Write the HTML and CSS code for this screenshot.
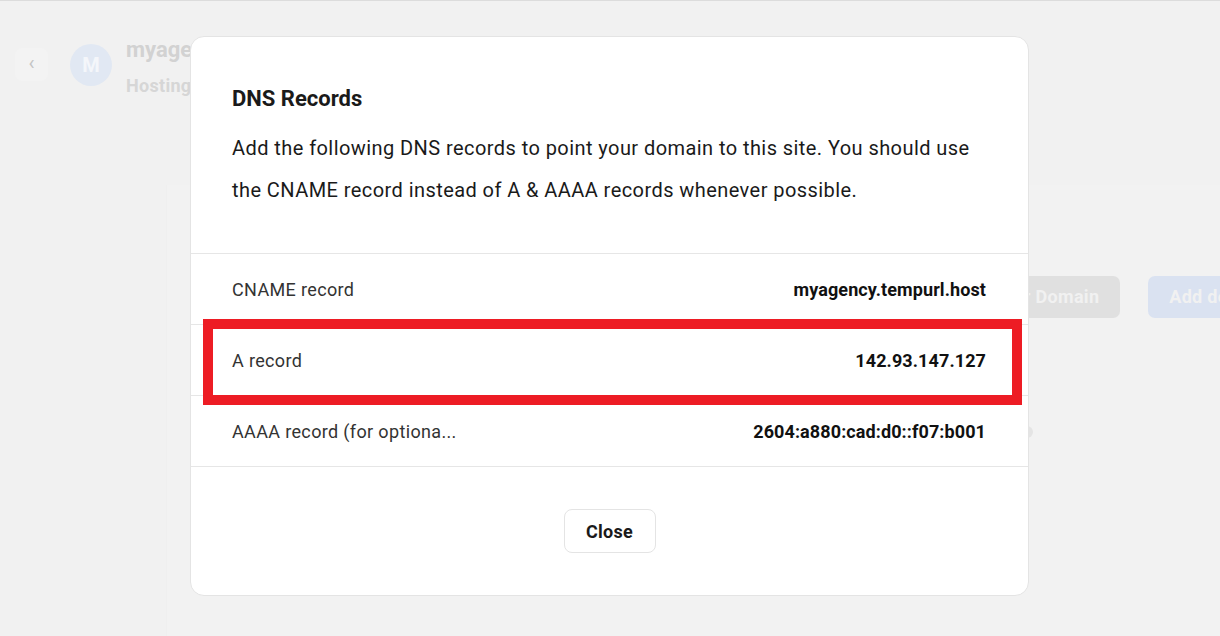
FILE: index.html
```html
<!DOCTYPE html>
<html lang="en">
<head>
<meta charset="utf-8">
<title>DNS Records</title>
<link rel="stylesheet" href="styles.css">
</head>
<body>
<div class="page">
  <header class="site-head">
    <div class="back-btn">‹</div>
    <div class="avatar">M</div>
    <div class="site-meta">
      <div class="site-name">myagency</div>
      <div class="site-sub">Hosting</div>
    </div>
  </header>
  <section class="bg-card">
    <div class="bg-actions">
      <div class="bg-btn gray">Transfer Domain</div>
      <div class="bg-btn blue">Add domain</div>
    </div>
    <div class="bg-dot-row"><span class="bg-dot"></span></div>
  </section>
</div>

<div class="overlay">
  <div class="modal">
    <div class="modal-head">
      <h2 class="modal-title">DNS Records</h2>
      <p class="modal-desc">Add the following DNS records to point your domain to this site. You should use the CNAME record instead of A &amp; AAAA records whenever possible.</p>
    </div>
    <div class="records">
      <div class="record">
        <span class="rec-label">CNAME record</span>
        <span class="rec-value">myagency.tempurl.host</span>
      </div>
      <div class="record highlighted">
        <span class="rec-label">A record</span>
        <span class="rec-value">142.93.147.127</span>
        <span class="red-box"></span>
      </div>
      <div class="record">
        <span class="rec-label">AAAA record (for optiona...</span>
        <span class="rec-value">2604:a880:cad:d0::f07:b001</span>
      </div>
    </div>
    <div class="modal-foot">
      <button class="close-btn">Close</button>
    </div>
  </div>
</div>
</body>
</html>
```

FILE: styles.css
```css
* { box-sizing: border-box; }
html, body { margin: 0; padding: 0; }
body {
  width: 1220px;
  height: 636px;
  overflow: hidden;
  background: #f1f1f1;
  border-top: 1px solid #dcdcdc;
  font-family: Roboto, "Liberation Sans", Arial, sans-serif;
  position: relative;
}

/* background page (faded behind modal) */
.page {
  padding: 43px 0 0 15px;
  height: 635px;
  overflow: hidden;
}
.site-head {
  display: flex;
  align-items: flex-start;
}
.back-btn {
  width: 33px;
  height: 33px;
  margin-top: 4px;
  border-radius: 7px;
  background: #f3f3f3;
  color: #c4c4c4;
  font-size: 20px;
  line-height: 31px;
  text-align: center;
}
.avatar {
  width: 42px;
  height: 42px;
  margin-left: 22px;
  border-radius: 50%;
  background: #e1e8f3;
  color: #f4f6fa;
  font-weight: 700;
  font-size: 20px;
  line-height: 42px;
  text-align: center;
}
.site-meta {
  margin-left: 14px;
  margin-top: -9px;
}
.site-name {
  font-size: 22px;
  font-weight: 700;
  color: #d2d2d2;
  line-height: 30px;
}
.site-sub {
  margin-top: 8px;
  font-size: 18px;
  font-weight: 700;
  color: #d6d6d6;
  line-height: 26px;
  letter-spacing: 0.3px;
}
.bg-card {
  margin: 86px 0 0 151px;
  width: 1100px;
  height: 460px;
  background: #f2f2f2;
  border-left: 1px solid #efefef;
}
.bg-actions {
  display: flex;
  gap: 28px;
  padding: 91px 0 0 772px;
}
.bg-btn {
  height: 42px;
  padding: 0 21px;
  border-radius: 7px;
  font-size: 18px;
  font-weight: 700;
  color: #f1f1f1;
  line-height: 42px;
  white-space: nowrap;
  letter-spacing: 0.3px;
}
.bg-btn.gray { background: #e0e0e0; }
.bg-btn.blue { background: #dae2f1; width: 150px; }
.bg-dot-row {
  padding: 108px 0 0 854px;
}
.bg-dot {
  display: block;
  width: 12px;
  height: 12px;
  border-radius: 50%;
  background: #e4e4e4;
}

/* modal overlay */
.overlay {
  position: absolute;
  inset: 0;
  display: flex;
  justify-content: flex-start;
  padding: 35px 0 0 190px;
}
.modal {
  position: relative;
  width: 839px;
  height: 560px;
  background: #fff;
  border: 1px solid #e4e4e4;
  border-radius: 14px;
  display: flex;
  flex-direction: column;
}
.modal-head {
  padding: 47px 42px 42px 41px;
  border-bottom: 1px solid #e6e6e6;
}
.modal-title {
  margin: 0;
  font-size: 22px;
  font-weight: 700;
  line-height: 30px;
  color: #1a1a1a;
}
.modal-desc {
  margin: 13px 0 0;
  font-size: 20px;
  line-height: 42px;
  letter-spacing: 0.43px;
  color: #1a1a1a;
}
.records {
  display: flex;
  flex-direction: column;
}
.record {
  position: relative;
  display: flex;
  justify-content: space-between;
  align-items: center;
  height: 71px;
  padding: 0 42px 0 41px;
  border-bottom: 1px solid #e6e6e6;
  font-size: 18px;
}
.rec-label { color: #333; letter-spacing: 0.35px; }
.rec-value { font-weight: 700; color: #111; letter-spacing: 0.1px; }
.red-box {
  position: absolute;
  left: 12px;
  right: 6px;
  top: -6px;
  bottom: -10px;
  border: 10px solid #ed1c24;
  pointer-events: none;
}
.modal-foot {
  display: flex;
  justify-content: center;
  padding-top: 42px;
}
.close-btn {
  width: 92px;
  height: 44px;
  border: 1px solid #e4e4e4;
  border-radius: 8px;
  background: #fff;
  font-family: Roboto, "Liberation Sans", Arial, sans-serif;
  font-size: 18px;
  font-weight: 700;
  letter-spacing: 0.3px;
  color: #1a1a1a;
}
```
